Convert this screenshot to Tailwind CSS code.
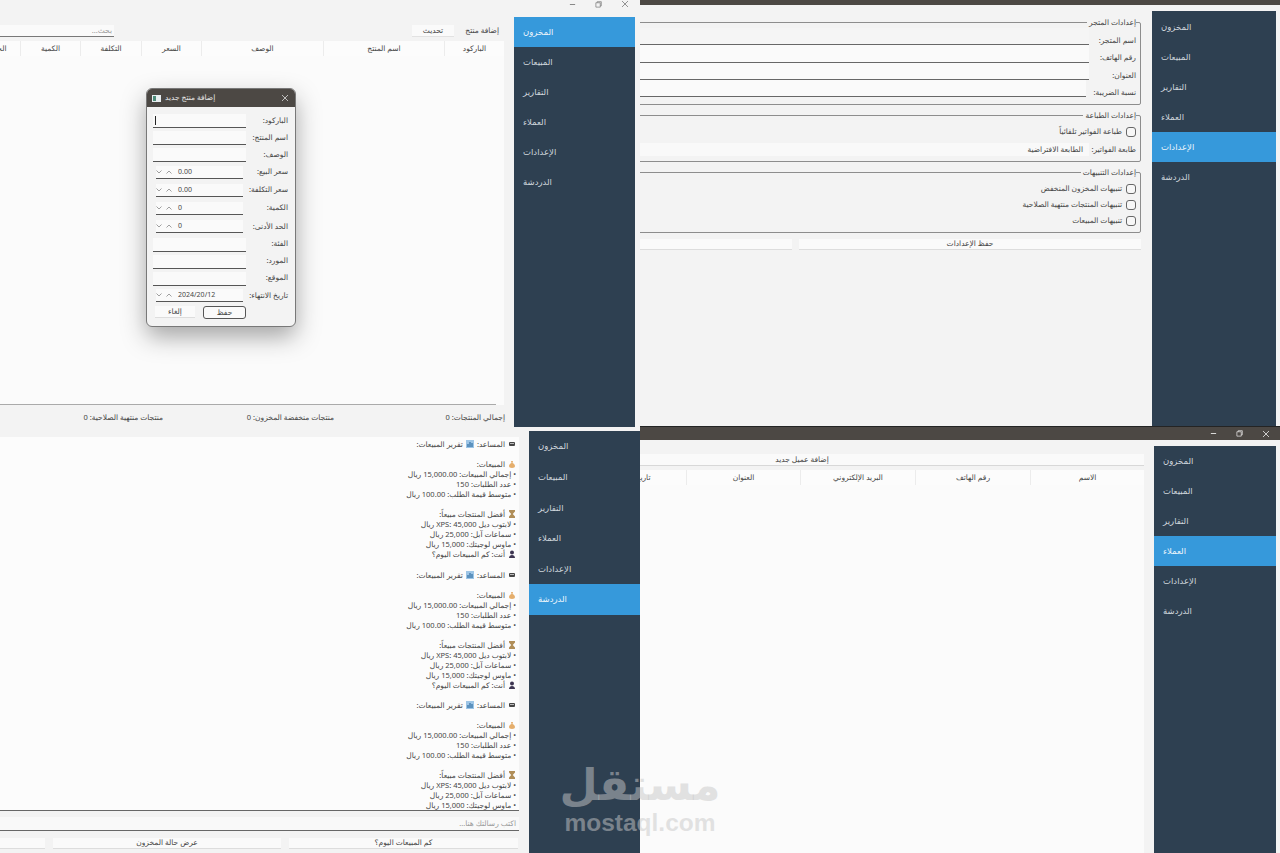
<!DOCTYPE html>
<html lang="ar">
<head>
<meta charset="utf-8">
<script src="https://cdn.jsdelivr.net/npm/@tailwindcss/browser@4"></script>
</head>
<body class="m-0 bg-[#f3f3f3]">
<div class="relative w-[1280px] h-[853px] overflow-hidden bg-[#f3f3f3] font-['Noto_Sans','DejaVu_Sans',sans-serif] text-[7.500px] text-[#444] whitespace-nowrap antialiased opacity-[.99]">

<!-- inventory window -->
<section class="absolute left-0 top-0 w-[640px] h-[431px] flex flex-col bg-[#f3f3f3]">
  <div class="h-[17px] shrink-0 flex justify-end items-center gap-[19px] pr-[11px] pb-[9px] text-[#777]">
    <svg class="w-[7px] h-[7px]" viewBox="0 0 8 8"><path d="M1 4h6" stroke="currentColor" fill="none"/></svg>
    <svg class="w-[7px] h-[7px]" viewBox="0 0 8 8"><path d="M1 2h5v5H1zM2.500 2V.8h4.700v4.700H6" stroke="currentColor" fill="none" stroke-width=".8"/></svg>
    <svg class="w-[8px] h-[8px]" viewBox="0 0 8 8"><path d="M1 1l6 6M7 1L1 7" stroke="currentColor" fill="none" stroke-width=".8"/></svg>
  </div>
  <div class="flex-1 min-h-0 flex">
    <main dir="rtl" class="w-[514px] shrink-0 overflow-hidden flex flex-col pr-[10px] pt-[8px]">
      <div class="h-[12px] flex items-center shrink-0 w-[504px]">
        <div class="w-[38px] mr-[5px] text-right">إضافة منتج</div>
        <div class="w-[42px] h-[12px] mr-[7px] bg-[#fbfbfb] border-b border-[#e2e2e2] flex items-center justify-center">تحديث</div>
        <div class="w-[114px] h-[12px] mr-auto bg-[#fbfbfb] border-b border-[#777] pr-[2px] text-[#999] flex items-center">بحث...</div>
      </div>
      <div class="w-[544px] h-[15px] mt-[4px] shrink-0 grid grid-cols-[60px_121px_122px_60px_61px_60px_60px] bg-[#fdfdfd] text-center leading-[15px]">
        <div class="border-l border-[#ececec]">الباركود</div>
        <div class="border-l border-[#ececec]">اسم المنتج</div>
        <div class="border-l border-[#ececec]">الوصف</div>
        <div class="border-l border-[#ececec]">السعر</div>
        <div class="border-l border-[#ececec]">التكلفة</div>
        <div class="border-l border-[#ececec]">الكمية</div>
        <div>الحد الأدنى</div>
      </div>
      <div class="w-[504px] h-[349px] shrink-0 bg-[#fcfcfc]"><div class="h-full mr-[8px] border-b border-[#aaa]"></div></div>
      <div class="w-[505px] mr-[-1px] mt-[7px] h-[12px] shrink-0 relative flex items-center">
        <div class="w-[56px]">إجمالي المنتجات: 0</div>
        <div class="w-[82px] mr-[115px]">منتجات منخفضة المخزون: 0</div>
        <div class="w-[78px] mr-[89px]">منتجات منتهية الصلاحية: 0</div>
      </div>
    </main>
    <nav class="w-[121px] h-[410px] shrink-0 bg-[#2c3e50] text-[8.500px] text-[#d0d7dd]">
      <div class="h-[30px] flex items-center pl-[9px] bg-[#3498db] text-[#eef6fb]">المخزون</div>
      <div class="h-[30px] flex items-center pl-[9px]">المبيعات</div>
      <div class="h-[30px] flex items-center pl-[9px]">التقارير</div>
      <div class="h-[30px] flex items-center pl-[9px]">العملاء</div>
      <div class="h-[30px] flex items-center pl-[9px]">الإعدادات</div>
      <div class="h-[30px] flex items-center pl-[9px]">الدردشة</div>
    </nav>
  </div>
</section>

<!-- product dialog -->
<div dir="rtl" class="absolute left-[146px] top-[88px] w-[150px] h-[239px] rounded-[6px] bg-[#f3f3f3] border border-[#777] overflow-hidden shadow-[0_10px_24px_rgba(0,0,0,0.35)] flex flex-col">
  <div dir="ltr" class="h-[18px] shrink-0 bg-[#4b4642] text-[#e6e6e6] flex items-center pl-[5px] pr-[6px]">
    <svg class="w-[9px] h-[7px] shrink-0" viewBox="0 0 9 7"><rect width="9" height="7" fill="#e8eef0"/><rect x="1" y="1" width="3" height="5" fill="#4c8a78"/></svg>
    <span class="ml-[4px]">إضافة منتج جديد</span>
    <svg class="w-[8px] h-[8px] ml-auto" viewBox="0 0 8 8"><path d="M1 1l6 6M7 1L1 7" stroke="#ddd" fill="none" stroke-width=".8"/></svg>
  </div>
  <div class="flex-1 flex flex-col pr-[7px] pt-[7px]">
    <div class="flex h-[17px] items-start"><div class="w-[42px] leading-[11px] pt-[1px]">الباركود:</div><div class="w-[93px] h-[14px] bg-[#fbfbfb] border-b border-[#555] pr-[90px] pt-[2px]"><div class="w-px h-[9px] bg-[#222]"></div></div></div>
    <div class="flex h-[17px] items-start"><div class="w-[42px] leading-[11px] pt-[1px]">اسم المنتج:</div><div class="w-[93px] h-[14px] bg-[#fbfbfb] border-b border-[#555]"></div></div>
    <div class="flex h-[18px] items-start"><div class="w-[42px] leading-[11px] pt-[1px]">الوصف:</div><div class="w-[93px] h-[14px] bg-[#fbfbfb] border-b border-[#555]"></div></div>
    <div class="flex h-[18px] items-start"><div class="w-[45px] leading-[11px]">سعر البيع:</div>
      <div dir="ltr" class="w-[87px] h-[13px] bg-[#fbfbfb] border-b border-[#555] flex items-center gap-[4px]"><svg class="w-[6px] h-[4px]" viewBox="0 0 6 4"><path d="M.5.5L3 3 5.500.5" stroke="#777" fill="none" stroke-width=".7"/></svg><svg class="w-[6px] h-[4px]" viewBox="0 0 6 4"><path d="M.5 3.500L3 1l2.500 2.500" stroke="#777" fill="none" stroke-width=".7"/></svg><span class="ml-[2px] text-[7px]">0.00</span></div></div>
    <div class="flex h-[18px] items-start"><div class="w-[45px] leading-[11px]">سعر التكلفة:</div>
      <div dir="ltr" class="w-[87px] h-[13px] bg-[#fbfbfb] border-b border-[#555] flex items-center gap-[4px]"><svg class="w-[6px] h-[4px]" viewBox="0 0 6 4"><path d="M.5.5L3 3 5.500.5" stroke="#777" fill="none" stroke-width=".7"/></svg><svg class="w-[6px] h-[4px]" viewBox="0 0 6 4"><path d="M.5 3.500L3 1l2.500 2.500" stroke="#777" fill="none" stroke-width=".7"/></svg><span class="ml-[2px] text-[7px]">0.00</span></div></div>
    <div class="flex h-[18px] items-start"><div class="w-[45px] leading-[11px]">الكمية:</div>
      <div dir="ltr" class="w-[87px] h-[13px] bg-[#fbfbfb] border-b border-[#555] flex items-center gap-[4px]"><svg class="w-[6px] h-[4px]" viewBox="0 0 6 4"><path d="M.5.5L3 3 5.500.5" stroke="#777" fill="none" stroke-width=".7"/></svg><svg class="w-[6px] h-[4px]" viewBox="0 0 6 4"><path d="M.5 3.500L3 1l2.500 2.500" stroke="#777" fill="none" stroke-width=".7"/></svg><span class="ml-[2px] text-[7px]">0</span></div></div>
    <div class="flex h-[18px] items-start"><div class="w-[45px] leading-[11px] pt-[1px]">الحد الأدنى:</div>
      <div dir="ltr" class="w-[87px] h-[13px] bg-[#fbfbfb] border-b border-[#555] flex items-center gap-[4px]"><svg class="w-[6px] h-[4px]" viewBox="0 0 6 4"><path d="M.5.5L3 3 5.500.5" stroke="#777" fill="none" stroke-width=".7"/></svg><svg class="w-[6px] h-[4px]" viewBox="0 0 6 4"><path d="M.5 3.500L3 1l2.500 2.500" stroke="#777" fill="none" stroke-width=".7"/></svg><span class="ml-[2px] text-[7px]">0</span></div></div>
    <div class="flex h-[17px] items-start"><div class="w-[42px] leading-[11px]">الفئة:</div><div class="w-[93px] h-[14px] bg-[#fbfbfb] border-b border-[#555]"></div></div>
    <div class="flex h-[17px] items-start"><div class="w-[42px] leading-[11px]">المورد:</div><div class="w-[93px] h-[14px] bg-[#fbfbfb] border-b border-[#555]"></div></div>
    <div class="flex h-[17px] items-start"><div class="w-[42px] leading-[11px]">الموقع:</div><div class="w-[93px] h-[14px] bg-[#fbfbfb] border-b border-[#555]"></div></div>
    <div class="flex h-[17px] items-start"><div class="w-[45px] leading-[11px] pt-[1px]">تاريخ الانتهاء:</div>
      <div dir="ltr" class="w-[87px] h-[13px] bg-[#fbfbfb] border-b border-[#555] flex items-center gap-[4px]"><svg class="w-[6px] h-[4px]" viewBox="0 0 6 4"><path d="M.5.5L3 3 5.500.5" stroke="#777" fill="none" stroke-width=".7"/></svg><svg class="w-[6px] h-[4px]" viewBox="0 0 6 4"><path d="M.5 3.500L3 1l2.500 2.500" stroke="#777" fill="none" stroke-width=".7"/></svg><span class="ml-[2px] text-[7px]">2024/20/12</span></div></div>
    <div class="flex h-[13px] mr-[42px]">
      <div class="w-[43px] h-[13px] rounded-[3px] border border-[#555] bg-[#fbfbfb] flex items-center justify-center">حفظ</div>
      <div class="w-[40px] h-[12px] mr-[8px] bg-[#fbfbfb] border-b border-[#ddd] flex items-center justify-center">إلغاء</div>
    </div>
  </div>
</div>

<!-- settings window -->
<section class="absolute left-[640px] top-0 w-[640px] h-[427px] flex flex-col bg-[#f3f3f3]">
  <div class="h-[5px] shrink-0 bg-[#4b4642]"></div>
  <div class="flex-1 min-h-0 flex pt-[6px]">
    <main dir="rtl" class="w-[512px] shrink-0 overflow-hidden pr-[11px]">
      <fieldset class="w-[520px] h-[88px] mt-[6px] border border-[#8c8c8c] rounded-[2px] pr-[4px]">
        <legend class="h-[11px] leading-[11px] pl-[2px]">إعدادات المتجر</legend>
        <div class="flex h-[17.300px]"><div class="w-[47px] leading-[24px]">اسم المتجر:</div><div class="flex-1 border-b border-[#666] bg-[#f6f6f6]"></div></div>
        <div class="flex h-[17.300px]"><div class="w-[47px] leading-[24px]">رقم الهاتف:</div><div class="flex-1 border-b border-[#666] bg-[#fbfbfb]"></div></div>
        <div class="flex h-[17.300px]"><div class="w-[47px] leading-[24px]">العنوان:</div><div class="flex-1 border-b border-[#666] bg-[#fbfbfb]"></div></div>
        <div class="flex h-[17.300px]"><div class="w-[50px] leading-[24px]">نسبة الضريبة:</div><div class="flex-1 border-b border-[#666] bg-[#fbfbfb]"></div></div>
      </fieldset>
      <fieldset class="w-[520px] h-[52px] mt-[5px] border border-[#8c8c8c] rounded-[2px] pr-[4px]">
        <legend class="h-[11px] leading-[11px] pl-[2px]">إعدادات الطباعة</legend>
        <div class="flex items-center h-[12px] mt-[5px]"><div class="w-[10px] h-[10px] rounded-[3px] border border-[#666] bg-[#f8f8f8] ml-[4px]"></div><span>طباعة الفواتير تلقائياً</span></div>
        <div class="flex items-center h-[13px] mt-[5px]"><div class="w-[47px]">طابعة الفواتير:</div><div class="flex-1 h-[13px] bg-[#fafafa] leading-[13px] pr-[6px]">الطابعة الافتراضية</div></div>
      </fieldset>
      <fieldset class="w-[520px] h-[66px] mt-[5px] border border-[#8c8c8c] rounded-[2px] pr-[4px]">
        <legend class="h-[11px] leading-[11px] pl-[2px]">إعدادات التنبيهات</legend>
        <div class="flex items-center h-[16px] mt-[3px]"><div class="w-[10px] h-[10px] rounded-[3px] border border-[#666] bg-[#f8f8f8] ml-[4px]"></div><span>تنبيهات المخزون المنخفض</span></div>
        <div class="flex items-center h-[16px]"><div class="w-[10px] h-[10px] rounded-[3px] border border-[#666] bg-[#f8f8f8] ml-[4px]"></div><span>تنبيهات المنتجات منتهية الصلاحية</span></div>
        <div class="flex items-center h-[16px]"><div class="w-[10px] h-[10px] rounded-[3px] border border-[#666] bg-[#f8f8f8] ml-[4px]"></div><span>تنبيهات المبيعات</span></div>
      </fieldset>
      <div class="flex w-[520px] mt-[6px] gap-[7px]">
        <div class="w-[342px] h-[11px] bg-[#fbfbfb] border-b border-[#ddd] flex items-center justify-center">حفظ الإعدادات</div>
        <div class="flex-1 h-[11px] bg-[#fbfbfb] border-b border-[#ddd]"></div>
      </div>
    </main>
    <nav class="w-[124px] shrink-0 bg-[#2c3e50] text-[8.500px] text-[#d0d7dd]">
      <div class="h-[30px] mt-[1px] flex items-center pl-[9px]">المخزون</div>
      <div class="h-[30px] flex items-center pl-[9px]">المبيعات</div>
      <div class="h-[30px] flex items-center pl-[9px]">التقارير</div>
      <div class="h-[30px] flex items-center pl-[9px]">العملاء</div>
      <div class="h-[30px] flex items-center pl-[9px] bg-[#3498db] text-[#eef6fb]">الإعدادات</div>
      <div class="h-[30px] flex items-center pl-[9px]">الدردشة</div>
    </nav>
  </div>
</section>

<!-- chat window -->
<section class="absolute left-0 top-[431px] w-[640px] h-[422px] flex bg-[#f3f3f3]">
  <main dir="rtl" class="w-[529px] shrink-0 overflow-hidden flex flex-col pr-[10px] pt-[6px]">
    <div class="w-[519px] h-[374px] shrink-0 bg-[#fdfdfd] border-b border-[#666] overflow-hidden pr-[3px] pt-[2px] leading-[10.040px]">
      <div class="h-[130.500px]">
        <div class="h-[20px] flex items-start"><svg class="w-[8px] h-[8px] mt-[1px] ml-[3px]" viewBox="0 0 8 8"><rect x="1" y="2" width="6" height="4" rx="1" fill="#444"/><rect x="2" y="3" width="4" height="1" fill="#bbb"/></svg><span>المساعد:</span><svg class="w-[8px] h-[8px] mt-[1px] mx-[3px]" viewBox="0 0 8 8"><rect width="8" height="8" fill="#9cc5e6"/><path d="M2 7V4M4 7V2M6 7V3" stroke="#2f6ea5" stroke-width="1.200"/></svg><span>تقرير المبيعات:</span></div>
        <div class="flex items-start"><svg class="w-[8px] h-[8px] mt-[1px] ml-[3px]" viewBox="0 0 8 8"><path d="M3 1h2L4.500 3C6 3.500 7 5 7 6c0 1-1 2-3 2S1 7 1 6c0-1 1-2.500 2.500-3z" fill="#e5ae6b"/></svg><span>المبيعات:</span></div>
        <div>• إجمالي المبيعات: 15,000.00 ريال</div>
        <div>• عدد الطلبات: 150</div>
        <div class="h-[20px]">• متوسط قيمة الطلب: 100.00 ريال</div>
        <div class="flex items-start"><svg class="w-[8px] h-[8px] mt-[1px] ml-[3px]" viewBox="0 0 8 8"><path d="M1 0h6v1.500L4.800 4 7 6.500V8H1V6.500L3.200 4 1 1.500z" fill="#b08d57"/></svg><span>أفضل المنتجات مبيعاً:</span></div>
        <div>• لابتوب ديل XPS: 45,000 ريال</div>
        <div>• سماعات آبل: 25,000 ريال</div>
        <div>• ماوس لوجيتك: 15,000 ريال</div>
        <div class="flex items-start"><svg class="w-[8px] h-[8px] mt-[1px] ml-[3px]" viewBox="0 0 8 8"><circle cx="4" cy="2.500" r="2" fill="#3b3350"/><path d="M1 8c0-2 1.500-3 3-3s3 1 3 3z" fill="#3b3350"/></svg><span>أنت: كم المبيعات اليوم؟</span></div>
      </div>
      <div class="h-[130.500px]">
        <div class="h-[20px] flex items-start"><svg class="w-[8px] h-[8px] mt-[1px] ml-[3px]" viewBox="0 0 8 8"><rect x="1" y="2" width="6" height="4" rx="1" fill="#444"/><rect x="2" y="3" width="4" height="1" fill="#bbb"/></svg><span>المساعد:</span><svg class="w-[8px] h-[8px] mt-[1px] mx-[3px]" viewBox="0 0 8 8"><rect width="8" height="8" fill="#9cc5e6"/><path d="M2 7V4M4 7V2M6 7V3" stroke="#2f6ea5" stroke-width="1.200"/></svg><span>تقرير المبيعات:</span></div>
        <div class="flex items-start"><svg class="w-[8px] h-[8px] mt-[1px] ml-[3px]" viewBox="0 0 8 8"><path d="M3 1h2L4.500 3C6 3.500 7 5 7 6c0 1-1 2-3 2S1 7 1 6c0-1 1-2.500 2.500-3z" fill="#e5ae6b"/></svg><span>المبيعات:</span></div>
        <div>• إجمالي المبيعات: 15,000.00 ريال</div>
        <div>• عدد الطلبات: 150</div>
        <div class="h-[20px]">• متوسط قيمة الطلب: 100.00 ريال</div>
        <div class="flex items-start"><svg class="w-[8px] h-[8px] mt-[1px] ml-[3px]" viewBox="0 0 8 8"><path d="M1 0h6v1.500L4.800 4 7 6.500V8H1V6.500L3.200 4 1 1.500z" fill="#b08d57"/></svg><span>أفضل المنتجات مبيعاً:</span></div>
        <div>• لابتوب ديل XPS: 45,000 ريال</div>
        <div>• سماعات آبل: 25,000 ريال</div>
        <div>• ماوس لوجيتك: 15,000 ريال</div>
        <div class="flex items-start"><svg class="w-[8px] h-[8px] mt-[1px] ml-[3px]" viewBox="0 0 8 8"><circle cx="4" cy="2.500" r="2" fill="#3b3350"/><path d="M1 8c0-2 1.500-3 3-3s3 1 3 3z" fill="#3b3350"/></svg><span>أنت: كم المبيعات اليوم؟</span></div>
      </div>
      <div>
        <div class="h-[20px] flex items-start"><svg class="w-[8px] h-[8px] mt-[1px] ml-[3px]" viewBox="0 0 8 8"><rect x="1" y="2" width="6" height="4" rx="1" fill="#444"/><rect x="2" y="3" width="4" height="1" fill="#bbb"/></svg><span>المساعد:</span><svg class="w-[8px] h-[8px] mt-[1px] mx-[3px]" viewBox="0 0 8 8"><rect width="8" height="8" fill="#9cc5e6"/><path d="M2 7V4M4 7V2M6 7V3" stroke="#2f6ea5" stroke-width="1.200"/></svg><span>تقرير المبيعات:</span></div>
        <div class="flex items-start"><svg class="w-[8px] h-[8px] mt-[1px] ml-[3px]" viewBox="0 0 8 8"><path d="M3 1h2L4.500 3C6 3.500 7 5 7 6c0 1-1 2-3 2S1 7 1 6c0-1 1-2.500 2.500-3z" fill="#e5ae6b"/></svg><span>المبيعات:</span></div>
        <div>• إجمالي المبيعات: 15,000.00 ريال</div>
        <div>• عدد الطلبات: 150</div>
        <div class="h-[20px]">• متوسط قيمة الطلب: 100.00 ريال</div>
        <div class="flex items-start"><svg class="w-[8px] h-[8px] mt-[1px] ml-[3px]" viewBox="0 0 8 8"><path d="M1 0h6v1.500L4.800 4 7 6.500V8H1V6.500L3.200 4 1 1.500z" fill="#b08d57"/></svg><span>أفضل المنتجات مبيعاً:</span></div>
        <div>• لابتوب ديل XPS: 45,000 ريال</div>
        <div>• سماعات آبل: 25,000 ريال</div>
        <div>• ماوس لوجيتك: 15,000 ريال</div>
      </div>
    </div>
    <div class="w-[519px] h-[14px] shrink-0 mt-[6px] bg-[#fafafa] border-b border-[#666] pr-[3px] text-[#999] leading-[13px]">اكتب رسالتك هنا...</div>
    <div class="w-[540px] flex gap-[8px] mt-[7px] mr-[1px]">
      <div class="w-[229px] h-[11px] shrink-0 bg-[#fbfbfb] border-b border-[#ddd] flex items-center justify-center">كم المبيعات اليوم؟</div>
      <div class="w-[228px] h-[11px] shrink-0 bg-[#fbfbfb] border-b border-[#ddd] flex items-center justify-center">عرض حالة المخزون</div>
      <div class="w-[60px] h-[11px] shrink-0 bg-[#fbfbfb] border-b border-[#ddd]"></div>
    </div>
  </main>
  <nav class="w-[111px] shrink-0 bg-[#2c3e50] text-[8.500px] text-[#d0d7dd]">
    <div class="h-[30.600px] mt-[0.500px] flex items-center pl-[9px]">المخزون</div>
    <div class="h-[30.600px] flex items-center pl-[9px]">المبيعات</div>
    <div class="h-[30.600px] flex items-center pl-[9px]">التقارير</div>
    <div class="h-[30.600px] flex items-center pl-[9px]">العملاء</div>
    <div class="h-[30.600px] flex items-center pl-[9px]">الإعدادات</div>
    <div class="h-[30.600px] flex items-center pl-[9px] bg-[#3498db] text-[#eef6fb]">الدردشة</div>
  </nav>
</section>

<!-- customers window -->
<section class="absolute left-[640px] top-[426px] w-[640px] h-[427px] flex flex-col bg-[#f3f3f3]">
  <div class="h-[14px] shrink-0 bg-[#4b4642] border-t border-[#222] flex justify-end items-center gap-[19px] pr-[10px] text-[#eee]">
    <svg class="w-[7px] h-[7px]" viewBox="0 0 8 8"><path d="M1 4h6" stroke="currentColor" fill="none"/></svg>
    <svg class="w-[7px] h-[7px]" viewBox="0 0 8 8"><path d="M1 2h5v5H1zM2.500 2V.8h4.700v4.700H6" stroke="currentColor" fill="none" stroke-width=".8"/></svg>
    <svg class="w-[8px] h-[8px]" viewBox="0 0 8 8"><path d="M1 1l6 6M7 1L1 7" stroke="currentColor" fill="none" stroke-width=".8"/></svg>
  </div>
  <div class="flex-1 min-h-0 flex pt-[6px]">
    <main dir="rtl" class="w-[514px] shrink-0 overflow-hidden pr-[10px]">
      <div class="w-[684px] h-[12px] mt-[8px] bg-[#fbfbfb] border-b border-[#d8d8d8] flex items-center justify-center">إضافة عميل جديد</div>
      <div class="w-[720px] h-[15px] mt-[4px] grid grid-cols-[114px_115px_115px_114px_114px_114px] bg-[#fdfdfd] text-center leading-[15px]">
        <div class="border-l border-[#ececec]">الاسم</div>
        <div class="border-l border-[#ececec]">رقم الهاتف</div>
        <div class="border-l border-[#ececec]">البريد الإلكتروني</div>
        <div class="border-l border-[#ececec]">العنوان</div>
        <div>تاريخ التسجيل</div>
      </div>
      <div class="w-[504px] h-[400px] bg-[#fcfcfc]"></div>
    </main>
    <nav class="w-[122px] shrink-0 bg-[#2c3e50] text-[8.500px] text-[#d0d7dd]">
      <div class="h-[30px] flex items-center pl-[9px]">المخزون</div>
      <div class="h-[30px] flex items-center pl-[9px]">المبيعات</div>
      <div class="h-[30px] flex items-center pl-[9px]">التقارير</div>
      <div class="h-[30px] flex items-center pl-[9px] bg-[#3498db] text-[#eef6fb]">العملاء</div>
      <div class="h-[30px] flex items-center pl-[9px]">الإعدادات</div>
      <div class="h-[30px] flex items-center pl-[9px]">الدردشة</div>
    </nav>
  </div>
</section>

<!-- watermark -->
<div class="absolute left-[555px] top-[755px] w-[170px] flex flex-col items-center text-[#c6c6c6]/50 pointer-events-none">
  <div class="text-[44px] leading-[60px] font-bold font-['DejaVu_Sans',sans-serif]">مستقل</div>
  <div class="text-[24.500px] leading-[26px] mt-[-5px] font-bold font-['Liberation_Sans',sans-serif]">mostaql.com</div>
</div>
</div>
</body>
</html>
